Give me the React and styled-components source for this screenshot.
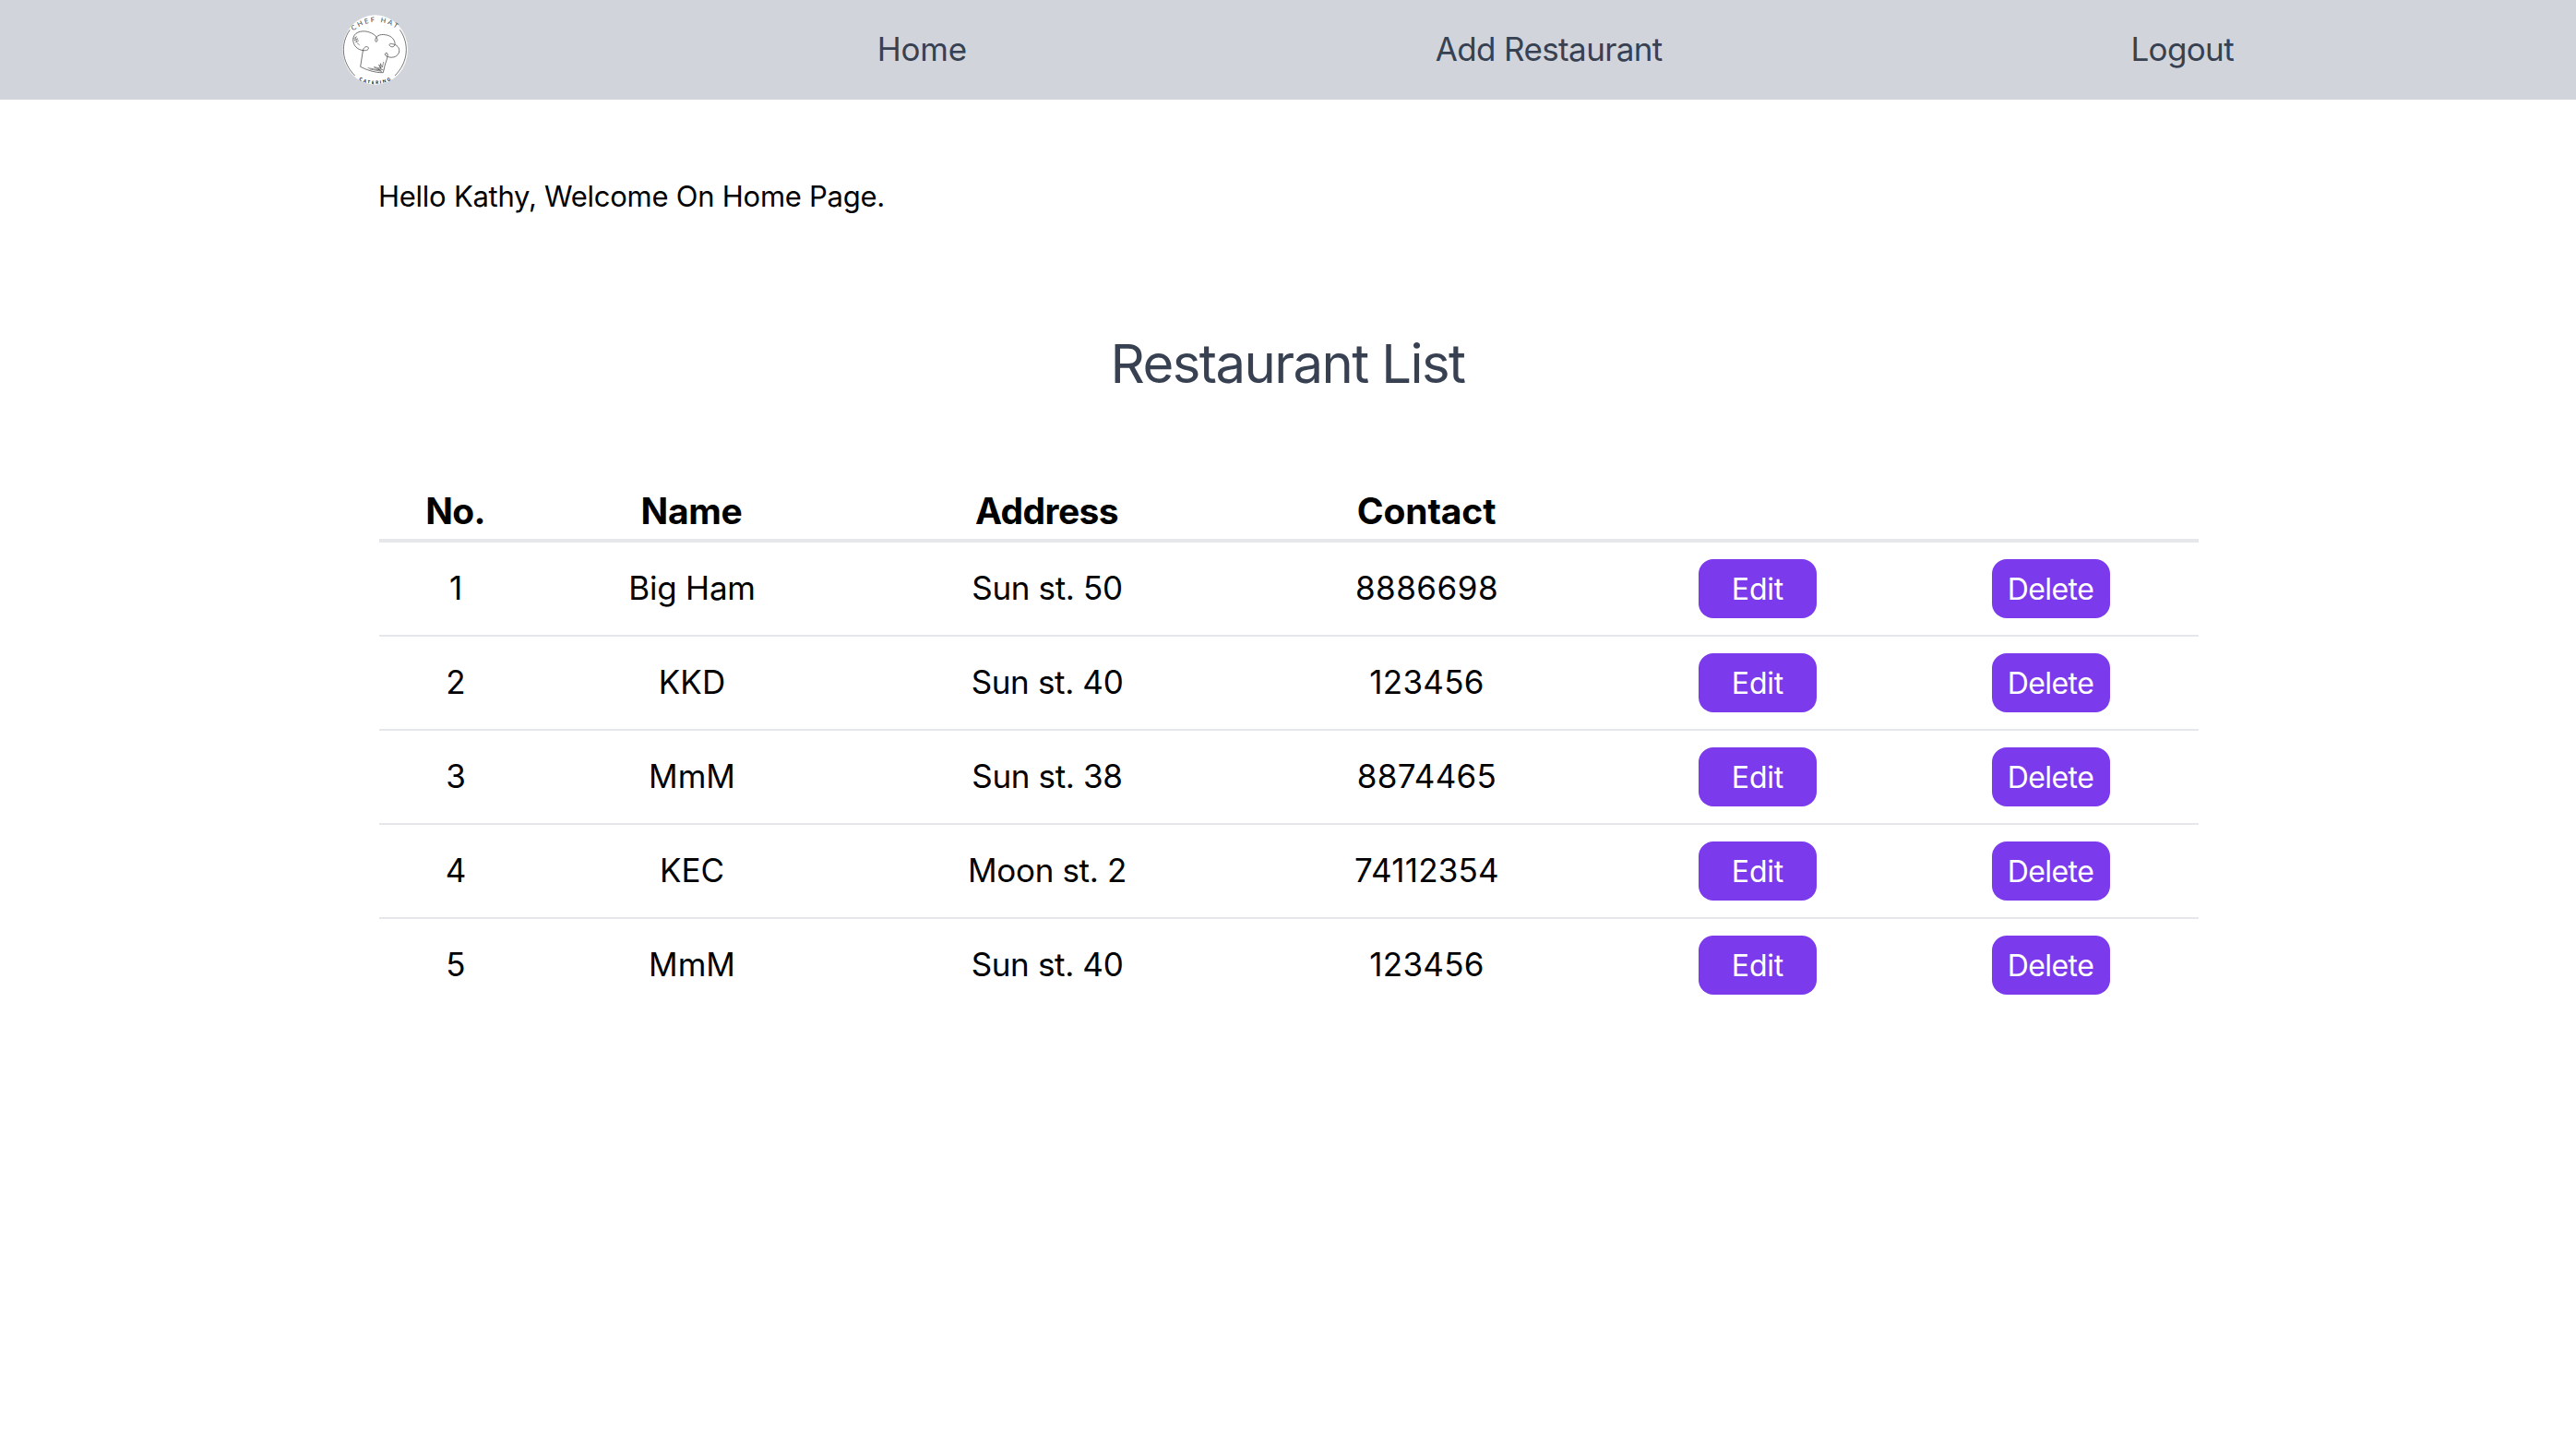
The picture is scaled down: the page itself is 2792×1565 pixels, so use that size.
import React from 'react';
import styled, { createGlobalStyle } from 'styled-components';

const GlobalStyle = createGlobalStyle`
  *, *::before, *::after { box-sizing: border-box; }
  body {
    margin: 0;
    background: #fff;
    color: #000;
    font-family: Inter, "Liberation Sans", sans-serif;
  }
`;

const NavBar = styled.nav`
  display: flex;
  align-items: center;
  justify-content: space-between;
  height: 108px;
  padding: 0 371px 1px 371px;
  background: #d1d5db;
`;

const LogoLink = styled.a`
  display: flex;
`;

const LogoArt = styled.svg`
  width: 72px;
  height: 76px;
`;

const LogoText = styled.text`
  font-family: Lato, sans-serif;
  font-size: ${(p) => p.$size}px;
  font-weight: ${(p) => p.$weight};
  fill: ${(p) => p.$fill};
`;

const NavLink = styled.a`
  padding-bottom: 2px;
  color: #374151;
  font-size: 35px;
  line-height: 56px;
  letter-spacing: ${(p) => p.$track}px;
  text-decoration: none;
`;

const Page = styled.main`
  display: flex;
  flex-direction: column;
  width: 1972px;
  margin-left: 411px;
  padding-top: 80px;
`;

const Greeting = styled.p`
  margin: 0 0 121px -1px;
  font-size: 31px;
  line-height: 49px;
  letter-spacing: -0.257px;
`;

const Title = styled.h1`
  margin: 0 0 93px;
  padding-right: 3px;
  color: #374151;
  font-size: 58px;
  font-weight: 400;
  line-height: 73px;
  letter-spacing: -1.574px;
  text-align: center;
`;

const Table = styled.div`
  display: flex;
  flex-direction: column;
`;

const Row = styled.div`
  display: grid;
  grid-template-columns: 165px 347px 423px 400px 318px 317px;
  align-items: center;
  justify-items: center;
  height: 102px;
  border-bottom: 2px solid #e5e7eb;

  &:last-child {
    height: 100px;
    border-bottom: 0;
  }
`;

const HeadRow = styled(Row)`
  height: 64px;
  border-bottom-width: 4px;
`;

const HeadCell = styled.span`
  font-size: 39px;
  font-weight: 700;
  line-height: 60px;
  letter-spacing: ${(p) => p.$track}px;
`;

const Cell = styled.span`
  padding: 0 0 2px 1px;
  font-size: 35px;
  line-height: 56px;
  letter-spacing: ${(p) => p.$track || 0}px;
`;

const Button = styled.button`
  width: 128px;
  height: 64px;
  padding: 2px 0 0;
  border: 0;
  border-radius: 16px;
  background: #7c3aed;
  color: #fff;
  font: inherit;
  font-size: 32px;
  line-height: 62px;
  letter-spacing: ${(p) => p.$track}px;
`;

const columns = [
  ['No.', -0.8],
  ['Name', -0.32],
  ['Address', -0.57],
  ['Contact', -0.1],
];

const restaurants = [
  { name: 'Big Ham', nameTrack: -0.2, address: 'Sun st. 50', contact: '8886698', contactTrack: 0.5 },
  { name: 'KKD', address: 'Sun st. 40', contact: '123456', contactTrack: 0.28 },
  { name: 'MmM', address: 'Sun st. 38', contact: '8874465', contactTrack: 0.3 },
  { name: 'KEC', address: 'Moon st. 2', contact: '74112354', contactTrack: 0.23 },
  { name: 'MmM', address: 'Sun st. 40', contact: '123456', contactTrack: 0.28 },
];

function Logo() {
  return (
    <LogoArt viewBox="0 0 216 228" aria-label="Chef Hat Catering">
      <defs>
        <path id="logo-top" d="M36.4 52.3 A110 110 0 0 1 188 56" />
        <path id="logo-bottom" d="M54 211.6 A107 107 0 0 0 166 207" />
      </defs>
      <ellipse cx="107" cy="114" rx="106" ry="113" fill="#fff" />
      <g fill="none" stroke="#4b4b4b" strokeWidth="2.3" strokeLinecap="round" strokeLinejoin="round">
        <path d="M24 50 C-6 93 -4 153 40 197" />
        <path d="M188 50 C218 93 216 153 172 197" />
        <path d="M69 116 C50 115 35 101 35 80 C36 58 60 50 82 55 C98 59 113 69 114 81 C115 89 107 90 107 83 C108 70 122 62 139 65 C157 67 168 77 171 91 C173 102 164 107 157 103 C149 98 155 91 163 95 C178 97 187 108 185 120 C182 135 166 142 149 137 C137 134 136 124 144 124 C152 126 144 148 139 162 L133 188 C105 189 76 178 59 169 L67 117 C69 103 83 100 85 108 C86 115 76 117 69 116" />
        <path strokeWidth="1.8" d="M37 78 L46 71 L40 84 L50 77 L44 90 L53 84 M49 93 L55 97" />
        <path strokeWidth="1.8" d="M84 173 L122 180 L103 170 L125 174 L119 162 L126 176 L124 158 L130 171 L134 154 M90 177 L128 184 L116 176 L132 179" />
      </g>
      <LogoText $size={22} $weight={400} $fill="#444">
        <textPath href="#logo-top" textLength="150" lengthAdjust="spacing">CHEF HAT</textPath>
      </LogoText>
      <LogoText $size={14} $weight={900} $fill="#111">
        <textPath href="#logo-bottom" textLength="108" lengthAdjust="spacing">CATERING</textPath>
      </LogoText>
    </LogoArt>
  );
}

export default function App() {
  return (
    <>
      <GlobalStyle />
      <NavBar>
        <LogoLink><Logo /></LogoLink>
        <NavLink $track={-0.22}>Home</NavLink>
        <NavLink $track={-0.63}>Add Restaurant</NavLink>
        <NavLink $track={-0.64}>Logout</NavLink>
      </NavBar>
      <Page>
        <Greeting>Hello Kathy, Welcome On Home Page.</Greeting>
        <Title>Restaurant List</Title>
        <Table>
          <HeadRow>
            {columns.map(([label, track]) => (
              <HeadCell key={label} $track={track}>{label}</HeadCell>
            ))}
          </HeadRow>
          {restaurants.map((r, i) => (
            <Row key={i}>
              <Cell>{i + 1}</Cell>
              <Cell $track={r.nameTrack}>{r.name}</Cell>
              <Cell $track={-0.35}>{r.address}</Cell>
              <Cell $track={r.contactTrack}>{r.contact}</Cell>
              <Button $track={-0.19}>Edit</Button>
              <Button $track={-0.56}>Delete</Button>
            </Row>
          ))}
        </Table>
      </Page>
    </>
  );
}
